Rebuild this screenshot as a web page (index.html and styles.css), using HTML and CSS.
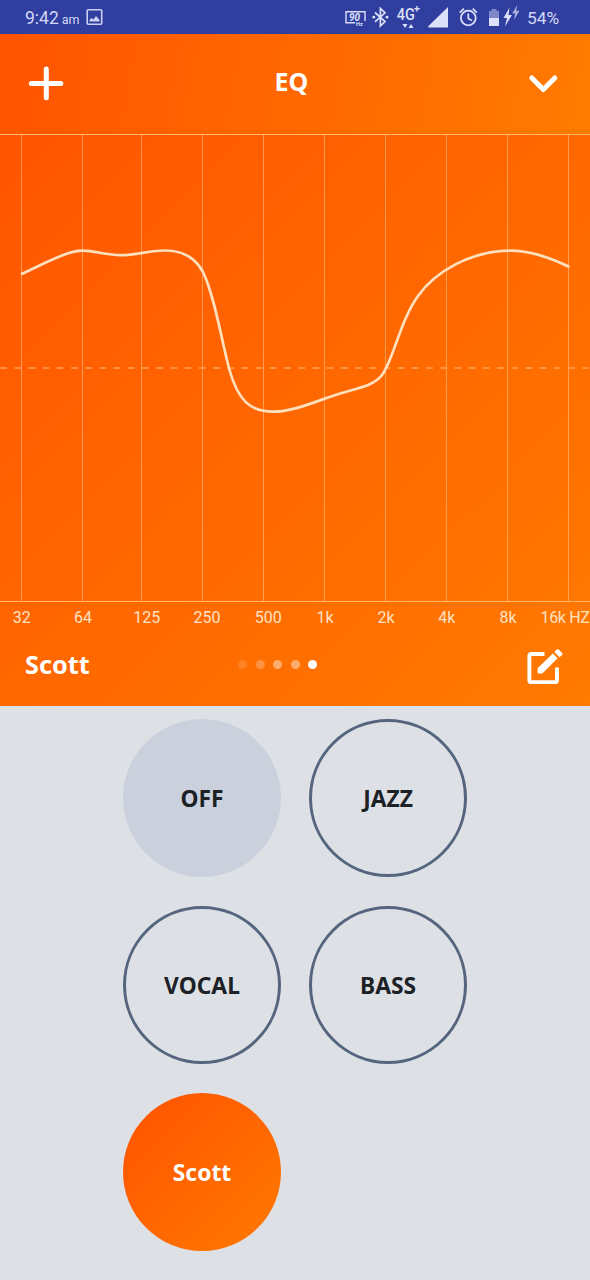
FILE: index.html
```html
<!DOCTYPE html>
<html lang="en">
<head>
<meta charset="utf-8">
<title>EQ</title>
<link rel="stylesheet" href="styles.css">
</head>
<body>
<div class="status">
  <span class="clock">9:42</span><span class="ampm">am</span>
  <svg class="status-left" width="18" height="18" viewBox="0 0 18 18"><rect x="1.200" y="1.800" width="14.500" height="14.500" rx="1" fill="none" stroke="#cbd0f2" stroke-width="1.600"/><path d="M3.500 13.500v-1.500l2-2 2 1.500 2.500-3.500 3.500 4v1.500z" fill="#cbd0f2"/></svg>
  <svg class="status-icons" width="181" height="34" viewBox="340 0 181 34">
    <g fill="none" stroke="#dde0fa" stroke-width="1.400">
      <path d="M355 22.800H346V11.800H365V21"/>
      <path d="M375 12.500l10 9-4.600 4.500V8.500l4.600 4.300-10 9" stroke-width="1.700"/>
      <circle cx="468.300" cy="18" r="7.400" stroke-width="1.800"/>
      <path d="M468.300 13.500v5l3.500 2M459.700 12.600l4.200-4M472.700 8.600l4.200 4" stroke-width="1.700"/>
    </g>
    <g fill="#dde0fa">
      <text x="349" y="20.600" font-size="10" font-weight="700" font-style="italic">90</text>
      <text x="356" y="25.500" font-size="5.500" font-weight="700">Hz</text>
      <circle cx="373.800" cy="17.200" r="1.400"/><circle cx="387" cy="17.200" r="1.400"/>
      <text x="396.800" y="20" font-size="16.500" font-weight="500" textLength="18" lengthAdjust="spacingAndGlyphs">4G</text>
      <path d="M416.300 6h1.400v2h2v1.400h-2v2h-1.400v-2h-2V8h2z"/>
      <path d="M402.500 24h5L405 28zM408.500 28h5L411 24z"/>
      <path d="M448 7v20.500h-19q-1.500 0-.5-1.500z"/>
      <path d="M489 11h2.500V9h5v2h2.500v7h-10z" opacity=".45"/><path d="M489 18h10v8h-10z"/>
      <path d="M509.500 7.500l-6 10.500h3.500l-2 8.500 7-11.500h-3.500z"/>
      <path d="M517.200 5l-5 8.500h3l-1.200 6.500 5.500-9.300h-3.300z" opacity=".7"/>
    </g>
  </svg>
  <span class="battery">54%</span>
</div>
<header class="header">
  <svg width="36" height="36" viewBox="0 0 36 36"><path d="M18.300 3v28.800M3.300 17.400h29.600" class="thick"/></svg>
  <h1 class="title">EQ</h1>
  <svg width="32" height="24" viewBox="0 0 32 24"><path d="M4.800 6L16.300 17.500 27.800 6" class="thick"/></svg>
</header>
<main class="panel">
  <svg class="chart" width="590" height="496" viewBox="0 134 590 496">
    <path class="edge" d="M0 134.500H590M0 601.500H590"/>
    <path class="grid" d="M21.500 134V601M82.500 134V601M141.500 134V601M202.500 134V601M263.500 134V601M324.500 134V601M385.500 134V601M446.500 134V601M507.500 134V601M568.500 134V601"/>
    <path class="zero" d="M0 368H590"/>
    <path class="curve" d="M21 274.200C37 267 50 260 62 255.500C70 252.300 76 250.700 83 250.700C95 250.700 106 255.200 121 255.200C136 255.200 150 250.500 165 250.500C183 250.500 195 257 203 272C215 297 222 343 229.500 370C238 400 250 411.700 273 411.700C294 411.700 316 401 340 393.500C360 387.500 374 385.500 382 375C393 361 400 321 418 296C435 272 470 250.700 511 250.700C530 250.700 548 256.500 569.500 267"/>
    <g class="labels">
      <text x="21.700" y="623">32</text><text x="83" y="623">64</text><text x="146.700" y="623">125</text><text x="207" y="623">250</text><text x="268.300" y="623">500</text><text x="325" y="623">1k</text><text x="386" y="623">2k</text><text x="446.700" y="623">4k</text><text x="508" y="623">8k</text><text x="565.200" y="623" textLength="49.500">16k HZ</text>
    </g>
  </svg>
  <div class="preset">
    <span class="preset-name">Scott</span>
    <div class="dots"><i class="dot d1"></i><i class="dot d2"></i><i class="dot d3"></i><i class="dot d3"></i><i class="dot"></i></div>
    <svg width="38" height="38" viewBox="2 -2.500 37 37"><path d="M19 5.300H6.500Q4.300 5.300 4.300 7.500V30.500Q4.300 32.700 6.500 32.700H29Q31.200 32.700 31.200 30.500V18.500" fill="none" stroke="#fff" stroke-width="3.800"/><path d="M13 18.500L27.200 4.800 31.800 9.400 17.700 23.500Q17 24.200 16 24.200H13.200Q12.300 24.200 12.300 23.300V20Q12.300 19.200 13 18.500zM28.600 3.400L31 1Q32 .1 33 1L36.200 4.200Q37.100 5.200 36.200 6.200L33.700 8.500z" fill="#fff"/></svg>
  </div>
</main>
<section class="presets">
  <button class="circle off">OFF</button>
  <button class="circle">JAZZ</button>
  <button class="circle">VOCAL</button>
  <button class="circle">BASS</button>
  <button class="circle active">Scott</button>
</section>
</body>
</html>
```
FILE: styles.css
```css
* { box-sizing: border-box; }
body { margin: 0; width: 590px; height: 1280px; overflow: hidden; background: #dde1e6; font-family: "Noto Sans", "Open Sans", sans-serif; }
svg { display: block; flex: none; }
.status { height: 34px; padding: 0 32px 0 25px; background: #303e9f; color: #d3d8f7; display: flex; align-items: center; font-family: Roboto, sans-serif; }
.clock { font-size: 17.5px; line-height: 34px; padding-top: 2px; }
.ampm { font-size: 12.5px; padding: 5px 0 0 3px; }
.status-left { margin-left: 6px; }
.status-icons { margin-left: auto; font-family: Roboto, sans-serif; }
.battery { width: 37px; padding: 2px 0 0 6px; font-size: 17.3px; }
.header { height: 100px; padding: 0 31px 1px 28px; display: grid; grid-template-columns: 36px 1fr 32px; align-items: center; background: linear-gradient(100deg, #ff5400, #ff7b00); }
.title { margin: 0; padding: 0 8px 6px 0; color: #fff; font-size: 25px; line-height: 32px; text-align: center; }
.thick { fill: none; stroke: #fff; stroke-width: 5; stroke-linecap: round; stroke-linejoin: round; }
.panel { height: 572px; background: linear-gradient(135deg, #ff5500, #ff7a00); }
.edge { stroke: #ffb673; fill: none; }
.grid { stroke: #ffd0a0; stroke-opacity: .5; fill: none; }
.zero { stroke: #ffb376; stroke-opacity: .75; stroke-width: 1.6; stroke-dasharray: 7 7.2; }
.curve { fill: none; stroke: #ffe0bd; stroke-width: 2.7; }
.labels { fill: #ffe2c4; font: 16px Roboto, sans-serif; text-anchor: middle; }
.preset { height: 70px; padding: 0 25px; display: grid; grid-template-columns: 213px 1fr 38px; align-items: center; }
.preset-name { color: #fff; font-size: 25.3px; font-weight: 700; line-height: 32px; padding-bottom: 2px; }
.dots { display: flex; gap: 8.6px; padding-bottom: 2px; }
.dot { width: 9px; height: 9px; border-radius: 50%; background: #fff; }
.d1 { opacity: .14; }
.d2 { opacity: .25; }
.d3 { opacity: .43; }
.presets { padding: 13px 123px 0; display: grid; grid-template-columns: 158px 158px; gap: 29px 28px; }
.circle { width: 158px; height: 158px; padding: 0; border: 3px solid #56657e; border-radius: 50%; background: none; color: #1c2126; font: 700 22.8px "Noto Sans", sans-serif; }
.off { border: 0; background: #cbd1dc; }
.active { border: 0; color: #fff; background: linear-gradient(135deg, #ff5200, #ff7a00); }
```
